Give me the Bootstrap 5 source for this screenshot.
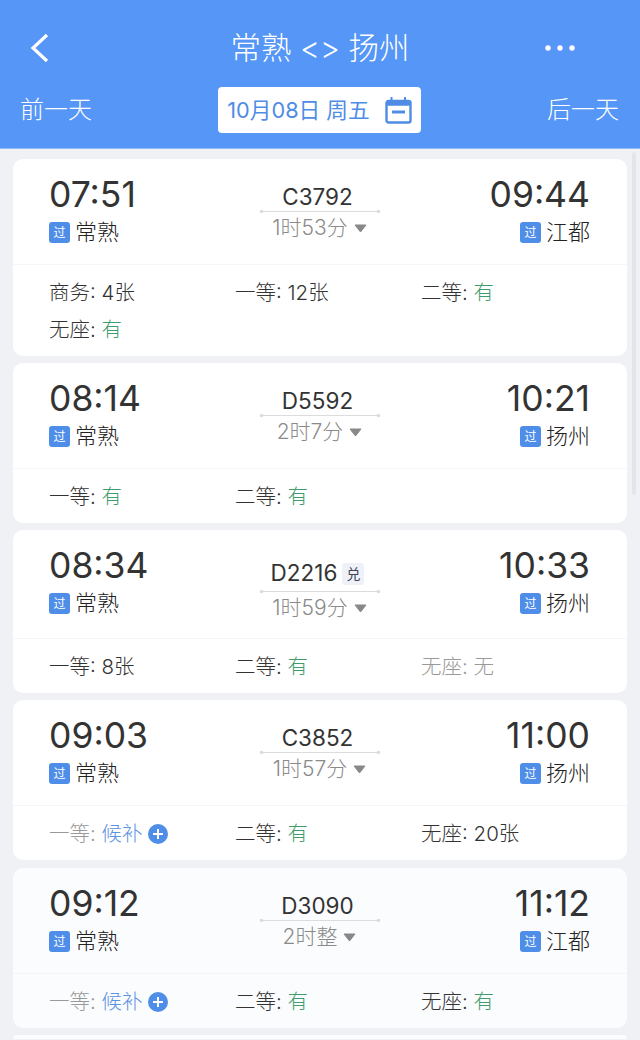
<!DOCTYPE html>
<html lang="zh-CN">
<head>
    <meta charset="UTF-8">
    <title>常熟 - 扬州</title>
    <link href="https://cdn.jsdelivr.net/npm/bootstrap@5.3.0/dist/css/bootstrap.min.css" rel="stylesheet">
    <style>
        html, body { height: 1040px; overflow: hidden; }
        body {
            background-color: #f0f1f5;
            color: #333;
            font-family: Inter, "Noto Sans CJK SC", sans-serif;
            font-weight: 400;
        }
        .top-head { height: 149px; background-color: #5596f6; color: #fff; border-bottom: 1px solid #8fbaf9; }
        .title-row { height: 87px; padding: 8px 65px 0 29px; position: relative; }
        .title-text {
            position: absolute; left: 0; right: 0; top: 28px; text-align: center;
            font-size: 30.500px; line-height: 40px; font-weight: 300;
        }
        .day-row { padding: 0 21px 0 20px; font-size: 24px; font-weight: 300; }
        .date-box {
            width: 203px; height: 46px; background-color: #fff; color: #4f8ce6;
            border-radius: 4px; font-size: 21.700px; gap: 15px; font-weight: 400;
        }
        .train-list { padding: 10px 13px 0; }
        .train-item { background-color: #fff; border-radius: 10px; margin-bottom: 7px; }
        .train-item.tinted { background-color: #fbfcfe; margin-top: 8px; }
        .train-item.tinted .seat-box { padding-bottom: 8px; }
        .tail-item { height: 4px; background-color: #fbfcfe; border-radius: 10px 10px 0 0; }
        .train-main {
            height: 106px; padding: 16px 37px 0 36px;
            display: grid; grid-template-columns: 1fr 120px 1fr;
            border-bottom: 1px solid #f5f5f7;
        }
        .train-main.tall { height: 109px; }
        .clock { font-size: 35.500px; line-height: 40px; color: #333; }
        .station { font-size: 22px; line-height: 30px; margin-top: 2px; color: #222; gap: 5px; font-weight: 300; }
        .via-tag {
            width: 21px; height: 21px; background-color: #4f8ee8; color: #fff;
            border-radius: 3px; font-size: 12px; line-height: 21px; text-align: center; font-weight: 400;
        }
        .train-no { font-size: 22.500px; line-height: 27px; margin-top: 8px; margin-right: 4px; color: #333; }
        .tall .train-no { margin-top: 13px; }
        .swap-tag {
            display: inline-block; width: 22px; height: 22px; margin-left: 5px; vertical-align: 2px;
            background-color: #eef1f8; color: #445; border-radius: 3px;
            font-size: 14px; line-height: 22px; text-align: center;
        }
        .train-line { height: 3px; position: relative; margin-top: 0; }
        .train-line::before {
            content: ""; position: absolute; left: 0; right: 0; top: 1px; height: 1px; background-color: #dcdcdf;
        }
        .train-line::after {
            content: ""; position: absolute; left: 0; right: 0; top: 0; height: 3px;
            background-image: radial-gradient(circle at 1.5px 1.5px, #dcdcdf 1.5px, transparent 1.6px),
                              radial-gradient(circle at calc(100% - 1.5px) 1.5px, #dcdcdf 1.5px, transparent 1.6px);
        }
        .tall .train-line { margin-top: 4px; }
        .span-time { font-size: 21px; line-height: 30px; color: #8a8a8a; margin-top: 0; gap: 6px; font-weight: 300; }
        .seat-box { padding: 9px 37px 8px 36px; display: grid; grid-template-columns: repeat(3, 186px); }
        .seat-cell { height: 37px; font-size: 20.500px; line-height: 37px; color: #333; font-weight: 300; }
        .seat-cell.off { color: #999; }
        .seat-yes { color: #3f9d6d; }
        .seat-wait { color: #5b93e4; }
        .plus-dot {
            display: inline-block; width: 20px; height: 20px; border-radius: 50%;
            background-color: #4f8ee8; margin-left: 5px; vertical-align: -3px;
        }
        .plus-dot svg, .drop-arrow { display: block; }
        .page-bar {
            position: absolute; top: 152px; right: 4px; width: 4px; height: 343px;
            border-radius: 2px; background-color: #e4e5e9;
        }
    </style>
</head>
<body class="position-relative">

<!-- header -->
<header class="top-head">
    <div class="title-row d-flex justify-content-between align-items-center">
        <svg width="20" height="30" viewBox="0 0 20 30"><path d="M18 2 L4 15 L18 28" fill="none" stroke="#fff" stroke-width="3.200"/></svg>
        <div class="title-text">常熟 &lt;&gt; 扬州</div>
        <svg width="30" height="8" viewBox="0 0 30 8" fill="#fff"><circle cx="3" cy="4" r="2.700"/><circle cx="15" cy="4" r="2.700"/><circle cx="27" cy="4" r="2.700"/></svg>
    </div>
    <div class="day-row d-flex justify-content-between align-items-center">
        <span>前一天</span>
        <div class="date-box d-flex align-items-center justify-content-center">
            <span>10月08日&nbsp;周五</span>
            <svg width="27" height="27" viewBox="0 0 27 27" fill="none" stroke="#4f8ce6" stroke-width="2.400">
                <rect x="1.500" y="4" width="24" height="21.500" rx="2"/>
                <path d="M1.500 6.500 H25.500" stroke-width="4.500"/>
                <path d="M6.500 0 V5 M20 0 V5" stroke-width="2"/>
                <path d="M7 15 H20" stroke-width="3"/>
            </svg>
        </div>
        <span>后一天</span>
    </div>
</header>

<div class="train-list">

    <div class="train-item">
        <div class="train-main">
            <div>
                <div class="clock">07:51</div>
                <div class="station d-flex align-items-center"><span class="via-tag">过</span><span>常熟</span></div>
            </div>
            <div class="d-flex flex-column align-items-stretch text-center">
                <div class="train-no">C3792</div>
                <div class="train-line"></div>
                <div class="span-time d-flex justify-content-center align-items-center"><span>1时53分</span><svg class="drop-arrow" width="13" height="9" viewBox="0 0 13 9"><path d="M1 1 H12 L6.500 8 Z" fill="#888" stroke="#888" stroke-linejoin="round"/></svg></div>
            </div>
            <div class="text-end">
                <div class="clock">09:44</div>
                <div class="station d-flex align-items-center justify-content-end"><span class="via-tag">过</span><span>江都</span></div>
            </div>
        </div>
        <div class="seat-box">
            <div class="seat-cell">商务: 4张</div>
            <div class="seat-cell">一等: 12张</div>
            <div class="seat-cell">二等: <span class="seat-yes">有</span></div>
            <div class="seat-cell">无座: <span class="seat-yes">有</span></div>
        </div>
    </div>

    <div class="train-item">
        <div class="train-main">
            <div>
                <div class="clock">08:14</div>
                <div class="station d-flex align-items-center"><span class="via-tag">过</span><span>常熟</span></div>
            </div>
            <div class="d-flex flex-column align-items-stretch text-center">
                <div class="train-no">D5592</div>
                <div class="train-line"></div>
                <div class="span-time d-flex justify-content-center align-items-center"><span>2时7分</span><svg class="drop-arrow" width="13" height="9" viewBox="0 0 13 9"><path d="M1 1 H12 L6.500 8 Z" fill="#888" stroke="#888" stroke-linejoin="round"/></svg></div>
            </div>
            <div class="text-end">
                <div class="clock">10:21</div>
                <div class="station d-flex align-items-center justify-content-end"><span class="via-tag">过</span><span>扬州</span></div>
            </div>
        </div>
        <div class="seat-box">
            <div class="seat-cell">一等: <span class="seat-yes">有</span></div>
            <div class="seat-cell">二等: <span class="seat-yes">有</span></div>
        </div>
    </div>

    <div class="train-item">
        <div class="train-main tall">
            <div>
                <div class="clock">08:34</div>
                <div class="station d-flex align-items-center"><span class="via-tag">过</span><span>常熟</span></div>
            </div>
            <div class="d-flex flex-column align-items-stretch text-center">
                <div class="train-no">D2216<span class="swap-tag">兑</span></div>
                <div class="train-line"></div>
                <div class="span-time d-flex justify-content-center align-items-center"><span>1时59分</span><svg class="drop-arrow" width="13" height="9" viewBox="0 0 13 9"><path d="M1 1 H12 L6.500 8 Z" fill="#888" stroke="#888" stroke-linejoin="round"/></svg></div>
            </div>
            <div class="text-end">
                <div class="clock">10:33</div>
                <div class="station d-flex align-items-center justify-content-end"><span class="via-tag">过</span><span>扬州</span></div>
            </div>
        </div>
        <div class="seat-box">
            <div class="seat-cell">一等: 8张</div>
            <div class="seat-cell">二等: <span class="seat-yes">有</span></div>
            <div class="seat-cell off">无座: 无</div>
        </div>
    </div>

    <div class="train-item">
        <div class="train-main">
            <div>
                <div class="clock">09:03</div>
                <div class="station d-flex align-items-center"><span class="via-tag">过</span><span>常熟</span></div>
            </div>
            <div class="d-flex flex-column align-items-stretch text-center">
                <div class="train-no">C3852</div>
                <div class="train-line"></div>
                <div class="span-time d-flex justify-content-center align-items-center"><span>1时57分</span><svg class="drop-arrow" width="13" height="9" viewBox="0 0 13 9"><path d="M1 1 H12 L6.500 8 Z" fill="#888" stroke="#888" stroke-linejoin="round"/></svg></div>
            </div>
            <div class="text-end">
                <div class="clock">11:00</div>
                <div class="station d-flex align-items-center justify-content-end"><span class="via-tag">过</span><span>扬州</span></div>
            </div>
        </div>
        <div class="seat-box">
            <div class="seat-cell off">一等: <span class="seat-wait">候补</span><span class="plus-dot"><svg width="20" height="20" viewBox="0 0 20 20"><path d="M5 10 H15 M10 5 V15" stroke="#fff" stroke-width="2"/></svg></span></div>
            <div class="seat-cell">二等: <span class="seat-yes">有</span></div>
            <div class="seat-cell">无座: 20张</div>
        </div>
    </div>

    <div class="train-item tinted">
        <div class="train-main">
            <div>
                <div class="clock">09:12</div>
                <div class="station d-flex align-items-center"><span class="via-tag">过</span><span>常熟</span></div>
            </div>
            <div class="d-flex flex-column align-items-stretch text-center">
                <div class="train-no">D3090</div>
                <div class="train-line"></div>
                <div class="span-time d-flex justify-content-center align-items-center"><span>2时整</span><svg class="drop-arrow" width="13" height="9" viewBox="0 0 13 9"><path d="M1 1 H12 L6.500 8 Z" fill="#888" stroke="#888" stroke-linejoin="round"/></svg></div>
            </div>
            <div class="text-end">
                <div class="clock">11:12</div>
                <div class="station d-flex align-items-center justify-content-end"><span class="via-tag">过</span><span>江都</span></div>
            </div>
        </div>
        <div class="seat-box">
            <div class="seat-cell off">一等: <span class="seat-wait">候补</span><span class="plus-dot"><svg width="20" height="20" viewBox="0 0 20 20"><path d="M5 10 H15 M10 5 V15" stroke="#fff" stroke-width="2"/></svg></span></div>
            <div class="seat-cell">二等: <span class="seat-yes">有</span></div>
            <div class="seat-cell">无座: <span class="seat-yes">有</span></div>
        </div>
    </div>

    <div class="tail-item"></div>
</div>

<div class="page-bar"></div>

<script src="https://cdn.jsdelivr.net/npm/bootstrap@5.3.0/dist/js/bootstrap.bundle.min.js"></script>
</body>
</html>
